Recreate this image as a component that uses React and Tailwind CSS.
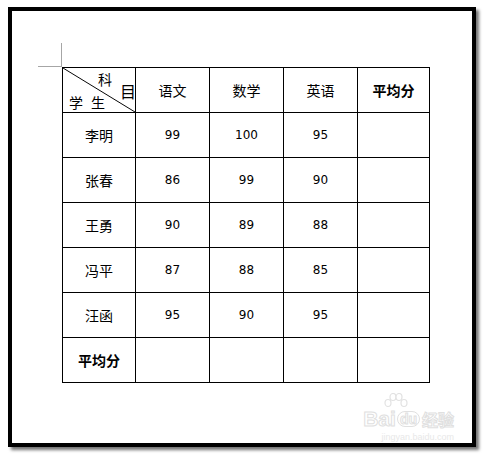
import React from "react";

const subjects = ["语文", "数学", "英语"];
const rows = [
  { name: "李明", scores: [99, 100, 95] },
  { name: "张春", scores: [86, 99, 90] },
  { name: "王勇", scores: [90, 89, 88] },
  { name: "冯平", scores: [87, 88, 85] },
  { name: "汪函", scores: [95, 90, 95] },
];

const cjk = { fontFamily: '"Noto Sans CJK SC", sans-serif' };
const num = { fontFamily: '"DejaVu Sans", sans-serif' };

const Watermark = () => (
  <div className="absolute right-[18px] bottom-[1px] flex flex-col items-end select-none">
    <svg width="30" height="22" viewBox="0 0 30 22" className="mr-[44px] -mb-[7px]">
      <g fill="white" stroke="#e2e2e2" strokeWidth="1.2">
        <ellipse cx="8" cy="10" rx="3" ry="3.5" />
        <ellipse cx="13" cy="4" rx="3" ry="3.5" />
        <ellipse cx="19" cy="4" rx="3" ry="3.5" />
        <ellipse cx="24" cy="10" rx="3" ry="3.5" />
      </g>
    </svg>
    <div className="flex items-center leading-none" style={{ fontFamily: '"Liberation Sans", sans-serif' }}>
      <span className="text-[21px] font-bold text-white [-webkit-text-stroke:1px_#e0e0e0]">Bai</span>
      <span className="ml-[1px] rounded-full border border-[#e0e0e0] bg-white px-[2px] text-[14px] font-bold text-white [-webkit-text-stroke:1px_#e0e0e0]">du</span>
      <span className="ml-[2px] text-[16px] font-bold text-white [-webkit-text-stroke:1px_#e0e0e0]" style={cjk}>经验</span>
    </div>
    <div className="mt-[4px] text-[9px] leading-none text-[#e8e8e8]" style={{ fontFamily: '"Liberation Sans", sans-serif' }}>
      jingyan.baidu.com
    </div>
  </div>
);

export default function App() {
  return (
    <div className="w-[483px] h-[460px] bg-white">
      <div className="relative ml-[8px] mt-[7px] w-[468px] h-[440px] border-4 border-black bg-white shadow-[3px_3px_3px_rgba(0,0,0,0.55)] pl-[50px] pt-[56px]">
        <div className="relative w-fit">
          <div className="absolute left-[-1px] top-[-24px] h-[24px] w-px bg-[#a6a6a6]" />
          <div className="absolute left-[-24px] top-[-1px] h-px w-[24px] bg-[#a6a6a6]" />
          <table className="table-fixed border-collapse text-black">
            <colgroup>
              <col className="w-[73px]" />
              <col className="w-[74px]" />
              <col className="w-[74px]" />
              <col className="w-[74px]" />
              <col className="w-[72px]" />
            </colgroup>
            <tbody>
              <tr className="h-[45px]">
                <td className="relative border border-black p-0">
                  <svg className="absolute inset-0 h-full w-full" preserveAspectRatio="none" viewBox="0 0 73 45">
                    <line x1="0" y1="0" x2="73" y2="45" stroke="black" strokeWidth="1" />
                  </svg>
                  <span className="absolute left-[35px] top-[4px] text-[14px] leading-none" style={cjk}>科</span>
                  <span className="absolute left-[57px] top-[15px] text-[16px] leading-none" style={cjk}>目</span>
                  <span className="absolute left-[6px] top-[27px] text-[14px] leading-none tracking-[8px]" style={cjk}>学生</span>
                </td>
                {subjects.map((s) => (
                  <td key={s} className="border border-black p-0 text-center text-[14px]" style={cjk}>
                    {s}
                  </td>
                ))}
                <td className="border border-black p-0 text-center text-[14px] font-bold" style={cjk}>
                  平均分
                </td>
              </tr>
              {rows.map((r) => (
                <tr key={r.name} className="h-[45px]">
                  <td className="border border-black p-0 text-center text-[14px]" style={cjk}>
                    {r.name}
                  </td>
                  {r.scores.map((v, i) => (
                    <td key={i} className="border border-black p-0 text-center text-[12px]" style={num}>
                      {v}
                    </td>
                  ))}
                  <td className="border border-black p-0" />
                </tr>
              ))}
              <tr className="h-[45px]">
                <td className="border border-black p-0 text-center text-[14px] font-bold" style={cjk}>
                  平均分
                </td>
                <td className="border border-black p-0" />
                <td className="border border-black p-0" />
                <td className="border border-black p-0" />
                <td className="border border-black p-0" />
              </tr>
            </tbody>
          </table>
        </div>
        <Watermark />
      </div>
    </div>
  );
}
